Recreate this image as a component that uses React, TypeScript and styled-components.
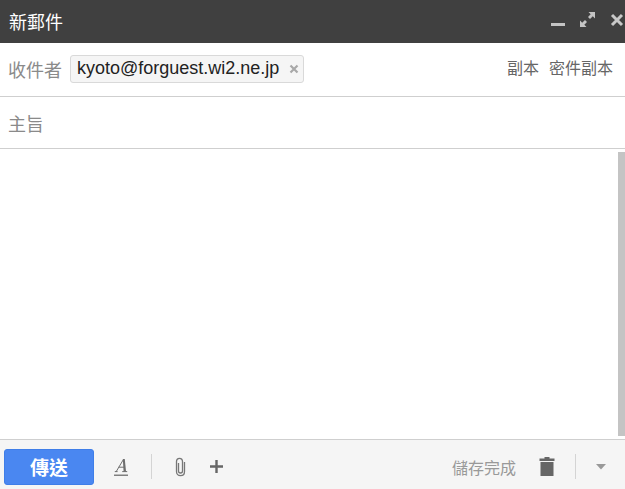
import React from 'react';
import styled, { createGlobalStyle } from 'styled-components';

const CJK = `"Liberation Sans", "Noto Sans CJK TC", sans-serif`;

const GlobalStyle = createGlobalStyle`
  html, body {
    margin: 0;
    padding: 0;
    background: #fff;
  }
  * {
    box-sizing: border-box;
  }
`;

const Compose = styled.div`
  width: 625px;
  height: 489px;
  display: flex;
  flex-direction: column;
  overflow: hidden;
  font-family: ${CJK};
`;

const TitleBar = styled.div`
  height: 43px;
  flex: none;
  background: #404040;
  display: flex;
  align-items: center;
  justify-content: space-between;
  padding: 0 0 0 9px;
`;

const Title = styled.div`
  color: #fff;
  font-size: 18px;
  margin-top: -1px;
`;

const WindowIcons = styled.div`
  display: flex;
  align-items: center;
  gap: 15px;
  padding-right: 1px;
  margin-top: -4px;
`;

const RecipientRow = styled.div`
  height: 54px;
  flex: none;
  border-bottom: 1px solid #cfcfcf;
  display: flex;
  align-items: center;
  padding: 0 12px 2px 8px;
`;

const ToLabel = styled.span`
  color: #8a8a8a;
  font-size: 18px;
  margin-right: 8px;
`;

const Chip = styled.div`
  height: 28px;
  width: 234px;
  display: flex;
  align-items: center;
  justify-content: space-between;
  padding: 0 4px 0 6px;
  background: #f5f5f5;
  border: 1px solid #d9d9d9;
  border-radius: 3px;
  color: #222;
  font-size: 18px;
`;

const CopyLinks = styled.div`
  margin-left: auto;
  display: flex;
  gap: 10px;
  color: #666;
  font-size: 16px;
  margin-top: -3px;
`;

const SubjectRow = styled.div`
  height: 52px;
  flex: none;
  border-bottom: 1px solid #cfcfcf;
  display: flex;
  align-items: center;
  padding: 0 0 0 8px;
  color: #8a8a8a;
  font-size: 18px;
`;

const Body = styled.div`
  flex: 1;
  display: flex;
  justify-content: flex-end;
  padding: 3px 0;
  background: #fff;
`;

const ScrollThumb = styled.div`
  width: 7px;
  background: #c4c4c4;
`;

const Footer = styled.div`
  height: 50px;
  flex: none;
  background: #f5f5f5;
  border-top: 1px solid #cfcfcf;
  display: flex;
  align-items: center;
  padding: 4px 19px 0 4px;
`;

const SendButton = styled.button`
  width: 90px;
  height: 36px;
  padding: 0;
  background: #4a87f1;
  border: 1px solid #3f7ee8;
  border-radius: 3px;
  color: #fff;
  font-family: ${CJK};
  font-size: 19px;
  font-weight: 700;
`;

const ToolIcon = styled.span<{ $left: number }>`
  display: flex;
  margin-left: ${({ $left }) => $left}px;
`;

const Divider = styled.div<{ $left: number }>`
  width: 1px;
  height: 25px;
  background: #d4d4d4;
  margin-left: ${({ $left }) => $left}px;
`;

const SavedText = styled.span`
  margin-left: auto;
  color: #999;
  font-size: 16px;
`;

export default function App() {
  return (
    <Compose>
      <GlobalStyle />
      <TitleBar>
        <Title>新郵件</Title>
        <WindowIcons>
          <svg width="14" height="14" viewBox="0 0 14 14">
            <rect x="0" y="10" width="14" height="3" fill="#c4c4c4" />
          </svg>
          <svg width="15" height="15" viewBox="0 0 15 15" fill="#c4c4c4">
            <path d="M8.5 0H15V6.5L12.8 4.3 10 7 8 5 10.7 2.2Z" />
            <path d="M0 8.5V15H6.5L4.3 12.8 7 10 5 8 2.2 10.7Z" />
          </svg>
          <svg width="14" height="14" viewBox="0 0 14 14">
            <path d="M2 2L12 12M12 2L2 12" stroke="#c8c8c8" strokeWidth="3" />
          </svg>
        </WindowIcons>
      </TitleBar>

      <RecipientRow>
        <ToLabel>收件者</ToLabel>
        <Chip>
          kyoto@forguest.wi2.ne.jp
          <svg width="10" height="10" viewBox="0 0 10 10">
            <path d="M1.5 1.5L8.5 8.5M8.5 1.5L1.5 8.5" stroke="#a8a8a8" strokeWidth="2.2" />
          </svg>
        </Chip>
        <CopyLinks>
          <span>副本</span>
          <span>密件副本</span>
        </CopyLinks>
      </RecipientRow>

      <SubjectRow>主旨</SubjectRow>

      <Body>
        <ScrollThumb />
      </Body>

      <Footer>
        <SendButton>傳送</SendButton>
        <ToolIcon $left={20}>
          <svg width="14" height="20" viewBox="0 0 14 20">
            <path d="M0.8 14.6H3.6M8.2 14.6H13.2M2.2 14.6L9.4 2.5M4.6 10.2H10.6" fill="none" stroke="#6e6e6e" strokeWidth="1" />
            <path d="M8.8 2H10.8L12 14.6H9.6Z" fill="#6e6e6e" />
            <rect x="0" y="17.5" width="14" height="1.5" fill="#808080" />
          </svg>
        </ToolIcon>
        <Divider $left={23} />
        <ToolIcon $left={22}>
          <svg width="13" height="20" viewBox="0 0 13 20" fill="none">
            <path d="M10.5 5V14.5C10.5 17 8.8 18.7 6.5 18.7S2.5 17 2.5 14.5V4.5C2.5 2.6 3.8 1.3 5.5 1.3S8.5 2.6 8.5 4.5V14C8.5 15.2 7.7 16 6.5 16S4.5 15.2 4.5 14V6" stroke="#777" strokeWidth="1.3" />
          </svg>
        </ToolIcon>
        <ToolIcon $left={23}>
          <svg width="13" height="13" viewBox="0 0 13 13">
            <path d="M6.5 0V13M0 6.5H13" stroke="#666" strokeWidth="2.4" />
          </svg>
        </ToolIcon>
        <SavedText>儲存完成</SavedText>
        <ToolIcon $left={23}>
          <svg width="16" height="19" viewBox="0 0 16 19" fill="#666">
            <rect x="5.5" y="0" width="5" height="2" />
            <rect x="0.5" y="1.5" width="15" height="2.5" />
            <rect x="1.5" y="5" width="13" height="14" />
          </svg>
        </ToolIcon>
        <Divider $left={20} />
        <ToolIcon $left={20}>
          <svg width="10" height="6" viewBox="0 0 10 6">
            <path d="M0 0H10L5 5.5Z" fill="#999" />
          </svg>
        </ToolIcon>
      </Footer>
    </Compose>
  );
}
